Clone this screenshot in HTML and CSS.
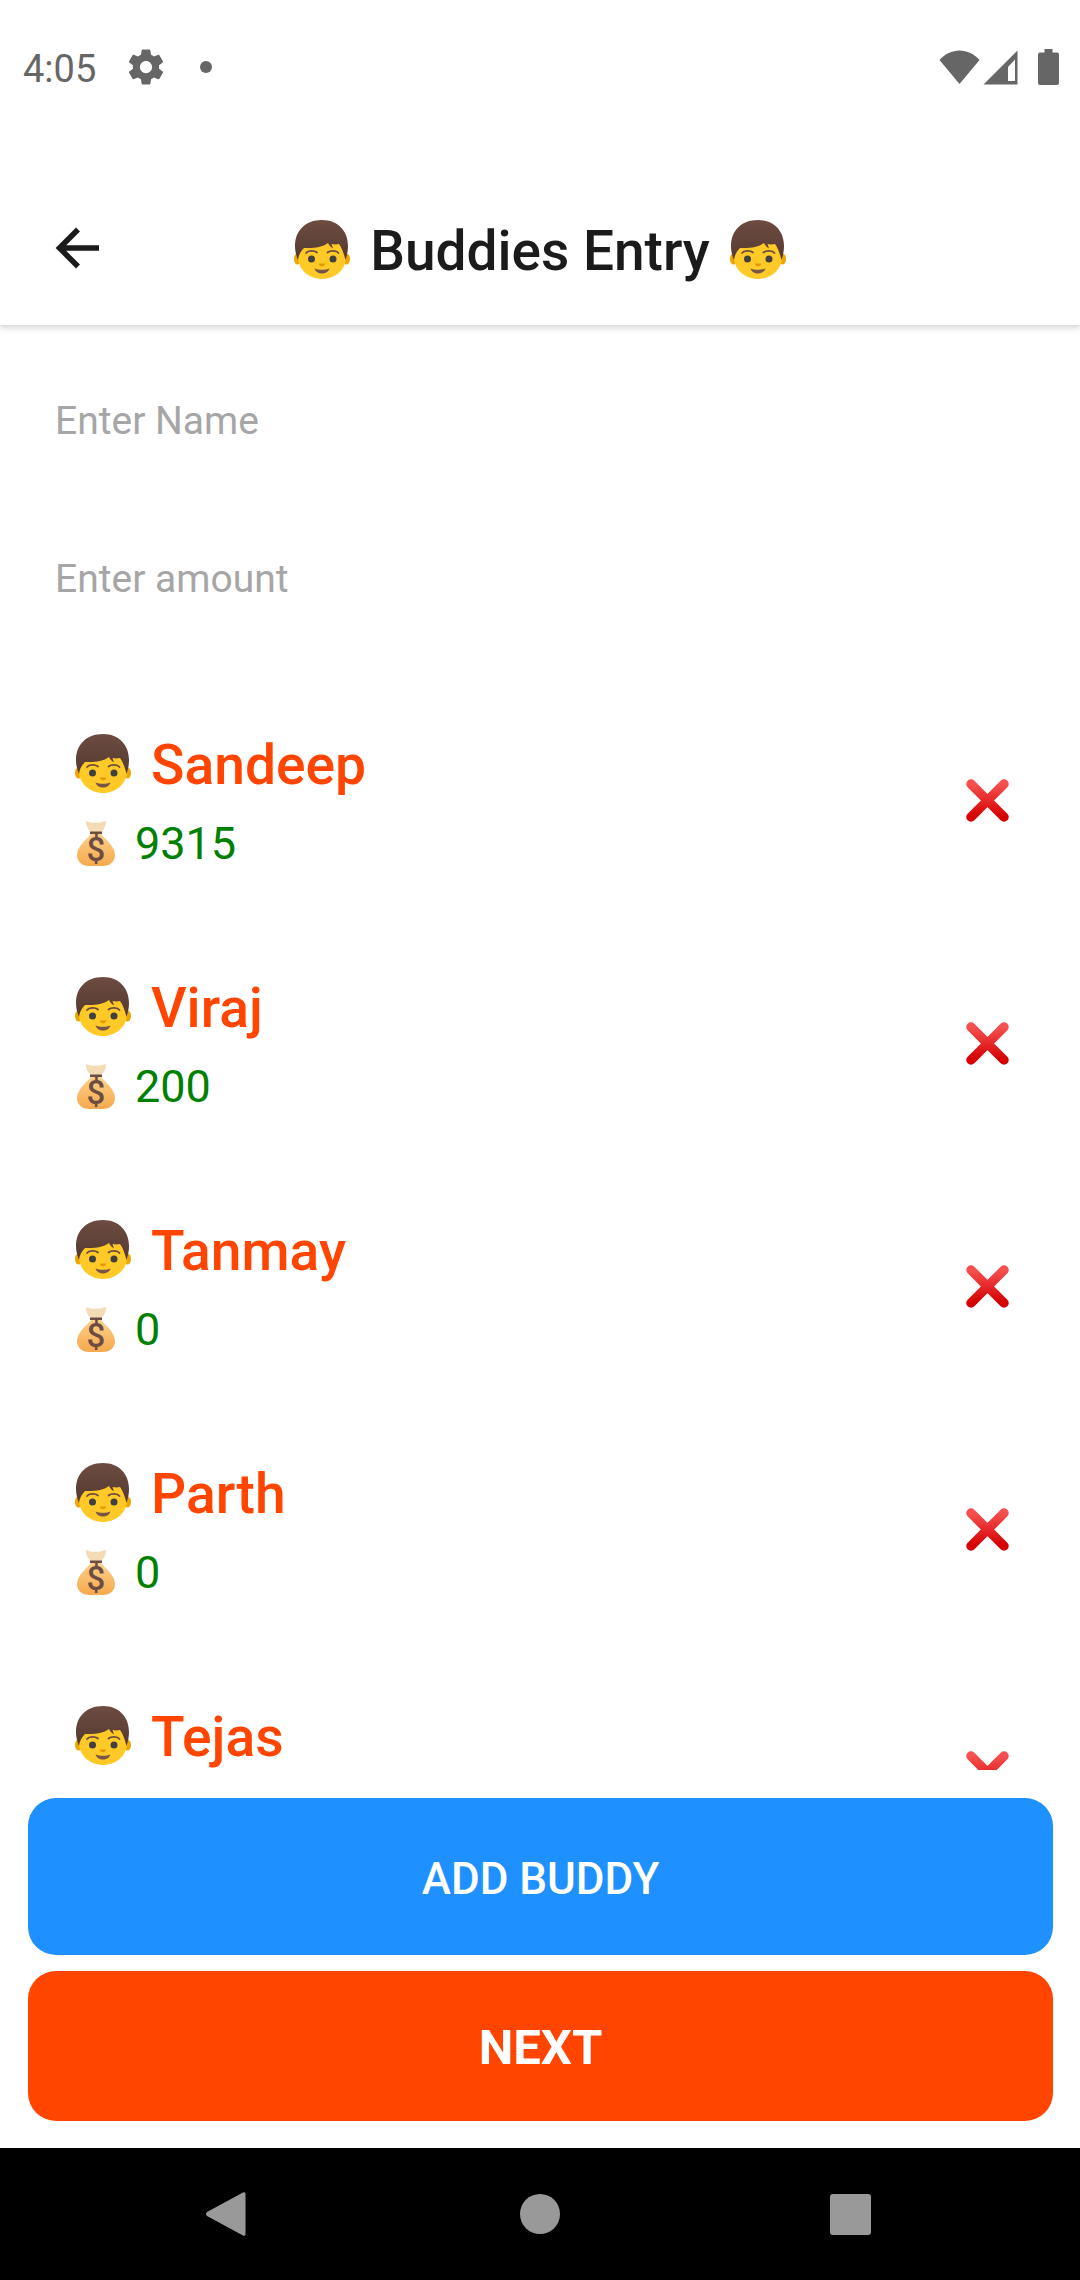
FILE: index.html
```html
<!DOCTYPE html>
<html lang="en">
<head>
  <meta charset="UTF-8">
  <title>Buddies Entry</title>
  <link rel="stylesheet" href="styles.css">
</head>
<body>
  <svg class="defs" width="0" height="0">
    <defs>
      <linearGradient id="hair-grad" x1="0" y1="0" x2="0" y2="1">
        <stop offset="0" stop-color="#6d4c41"/>
        <stop offset="1" stop-color="#543930"/>
      </linearGradient>
      <linearGradient id="bag-grad" x1="0" y1="0" x2="0" y2="1">
        <stop offset="0" stop-color="#fdd08a"/>
        <stop offset="1" stop-color="#f5a94e"/>
      </linearGradient>
      <linearGradient id="cross-grad" x1="0" y1="0" x2="0" y2="1">
        <stop offset="0" stop-color="#f65050"/>
        <stop offset="1" stop-color="#d50000"/>
      </linearGradient>
      <symbol id="boy" viewBox="8 8 58 60">
        <ellipse cx="12.500" cy="48" rx="3.500" ry="5.500" fill="#eda600"/>
        <ellipse cx="61.500" cy="48" rx="3.500" ry="5.500" fill="#eda600"/>
        <path d="M37 22C22 22 13 32 13 46c0 13 11.500 22 24 22s24-9 24-22C61 32 52 22 37 22z" fill="#ffca28"/>
        <path d="M37 9C20 9 10 20 10 35c0 5 1 9 3 14 .5-4 2-8 6-12 9 .5 18-.5 24-5 1 2 2.500 4 5 5.500L46.500 33C49 33.500 51.500 33.500 54 33 57 37 59 43 60.500 49 62 45 63 40 63 35 63 20 53 9 37 9z" fill="url(#hair-grad)"/>
        <circle cx="26.500" cy="48" r="3.500" fill="#404040"/>
        <circle cx="48" cy="48" r="3.500" fill="#404040"/>
        <path d="M21 42c2-2.500 8-3 11-.5" fill="none" stroke="#6d4c41" stroke-width="1.800" stroke-linecap="round"/>
        <path d="M42.500 41.500c3-2.500 9-2 11 .5" fill="none" stroke="#6d4c41" stroke-width="1.800" stroke-linecap="round"/>
        <path d="M34 52.500h6c.5 1.200-1.500 2.800-3 2.800s-3.500-1.600-3-2.800z" fill="#e59600"/>
        <path d="M29.500 57.500c4 1.800 11 1.800 15 0-.8 3-4 5-7.500 5s-6.700-2-7.500-5z" fill="#795548"/>
      </symbol>
      <symbol id="bag" viewBox="0 0 40 46">
        <path d="M10 1c3 1.500 6 2 10 1.500C24 3 27 2 30 1c.5 3.500-2 9-5 11h-10C12 10 9.500 4.500 10 1z" fill="#f3dcb5"/>
        <path d="M14 11.500h12v2.500H14z" fill="#6d4c41"/>
        <path d="M15 14C11 19 1 26 1 35c0 8 7 11 12 11h14c5 0 12-3 12-11 0-9-10-16-14-21z" fill="url(#bag-grad)"/>
        <text class="bag-sign" x="20" y="41" text-anchor="middle">$</text>
      </symbol>
      <symbol id="cross" viewBox="0 0 43 43">
        <path d="M5 5l33 33M38 5L5 38" fill="none" stroke="url(#cross-grad)" stroke-width="9.500" stroke-linecap="round"/>
      </symbol>
    </defs>
  </svg>

  <div class="phone">
    <div class="status-bar">
      <span class="clock">4:05</span>
      <svg class="gear" viewBox="0 0 24 24"><path fill="#666" d="M19.430 12.980c.04-.32.07-.64.07-.98s-.03-.66-.07-.98l2.110-1.650c.19-.15.240-.42.120-.64l-2-3.460c-.12-.22-.39-.30-.61-.22l-2.490 1c-.52-.40-1.080-.73-1.690-.98l-.38-2.650C14.460 2.180 14.250 2 14 2h-4c-.25 0-.46.18-.49.420l-.38 2.650c-.61.25-1.170.59-1.690.98l-2.490-1c-.23-.09-.49 0-.61.220l-2 3.460c-.13.22-.07.49.12.64l2.110 1.650c-.04.32-.07.65-.07.98s.03.66.07.98l-2.110 1.650c-.19.15-.24.42-.12.64l2 3.460c.12.22.39.30.61.22l2.490-1c.52.40 1.080.73 1.690.98l.38 2.650c.03.24.24.42.49.42h4c.25 0 .46-.18.49-.42l.38-2.650c.61-.25 1.170-.59 1.690-.98l2.490 1c.23.09.49 0 .61-.22l2-3.460c.12-.22.07-.49-.12-.64l-2.110-1.650zM12 15.500c-1.930 0-3.500-1.570-3.500-3.500s1.570-3.500 3.500-3.500 3.500 1.570 3.500 3.500-1.570 3.500-3.500 3.500z"/></svg>
      <span class="dot"></span>
      <span class="status-right">
        <svg class="wifi" viewBox="0 0 41 34"><path fill="#666" d="M.5 10C6 4 13 .500 20.500.500S35 4 40.500 10L20.500 34z"/></svg>
        <svg class="signal" viewBox="0 0 35 35"><path fill="#666" d="M34.500.500V34.500H.5z"/><path fill="#fff" d="M32 9.500V31h-7V17z"/></svg>
        <svg class="battery" viewBox="0 0 21 36"><path fill="#666" d="M6.500 0h8v3.500H19c1.100 0 2 .9 2 2V34c0 1.100-.9 2-2 2H2c-1.100 0-2-.9-2-2V5.500c0-1.100.9-2 2-2h4.500z"/></svg>
      </span>
    </div>

    <header class="toolbar">
      <svg class="back-arrow" viewBox="0 0 44 44"><path d="M44 22H5M23 3.500L4.500 22 23 40.500" fill="none" stroke="#1b1b1b" stroke-width="5.500"/></svg>
      <h1 class="title">
        <svg class="boy-title"><use href="#boy"/></svg>
        <span class="title-text">Buddies Entry</span>
        <svg class="boy-title"><use href="#boy"/></svg>
      </h1>
    </header>

    <div class="fields">
      <div class="field">Enter Name</div>
      <div class="field">Enter amount</div>
    </div>

    <div class="buddy-list">
      <div class="buddy">
        <div class="buddy-info">
          <div class="buddy-name"><svg class="boy-icon"><use href="#boy"/></svg>Sandeep</div>
          <div class="buddy-amount"><svg class="bag-icon"><use href="#bag"/></svg>9315</div>
        </div>
        <svg class="remove"><use href="#cross"/></svg>
      </div>
      <div class="buddy">
        <div class="buddy-info">
          <div class="buddy-name"><svg class="boy-icon"><use href="#boy"/></svg>Viraj</div>
          <div class="buddy-amount"><svg class="bag-icon"><use href="#bag"/></svg>200</div>
        </div>
        <svg class="remove"><use href="#cross"/></svg>
      </div>
      <div class="buddy">
        <div class="buddy-info">
          <div class="buddy-name"><svg class="boy-icon"><use href="#boy"/></svg>Tanmay</div>
          <div class="buddy-amount"><svg class="bag-icon"><use href="#bag"/></svg>0</div>
        </div>
        <svg class="remove"><use href="#cross"/></svg>
      </div>
      <div class="buddy">
        <div class="buddy-info">
          <div class="buddy-name"><svg class="boy-icon"><use href="#boy"/></svg>Parth</div>
          <div class="buddy-amount"><svg class="bag-icon"><use href="#bag"/></svg>0</div>
        </div>
        <svg class="remove"><use href="#cross"/></svg>
      </div>
      <div class="buddy">
        <div class="buddy-info">
          <div class="buddy-name"><svg class="boy-icon"><use href="#boy"/></svg>Tejas</div>
          <div class="buddy-amount"></div>
        </div>
        <svg class="remove"><use href="#cross"/></svg>
      </div>
    </div>

    <div class="actions">
      <button class="btn btn-add">ADD BUDDY</button>
      <button class="btn btn-next">NEXT</button>
    </div>

    <nav class="nav-bar">
      <svg class="nav-back" viewBox="0 0 40 44"><path fill="#999" d="M37 .5c1.500-.8 2.500 0 2.500 1.500v40c0 1.500-1 2.300-2.500 1.500L1 24c-1.300-1-1.300-3 0-4z"/></svg>
      <span class="nav-home"></span>
      <span class="nav-recent"></span>
    </nav>
  </div>
</body>
</html>
```

FILE: styles.css
```css
* {
  box-sizing: border-box;
}
html, body {
  margin: 0;
  padding: 0;
}
body {
  font-family: Roboto, "Liberation Sans", sans-serif;
  background-color: #fff;
}
.defs {
  position: absolute;
}
.bag-sign {
  font-family: Roboto, "Liberation Sans", sans-serif;
  font-size: 33px;
  font-weight: 500;
  fill: #6d4c41;
}
.phone {
  width: 1080px;
  height: 2280px;
  display: flex;
  flex-direction: column;
  overflow: hidden;
}

/* status bar */
.status-bar {
  height: 135px;
  flex: none;
  padding: 50px 21px 0 23px;
  display: flex;
  align-items: flex-start;
  background-color: #fff;
  position: relative;
  z-index: 1;
}
.clock {
  font-size: 38px;
  line-height: 38px;
  color: #666;
  width: 102px;
}
.gear {
  width: 42px;
  height: 42px;
  margin-top: -4px;
}
.dot {
  width: 12px;
  height: 12px;
  border-radius: 50%;
  background-color: #666;
  margin: 11px 0 0 33px;
}
.status-right {
  margin-left: auto;
  display: flex;
  align-items: flex-start;
}
.wifi {
  width: 41px;
  height: 34px;
}
.signal {
  width: 35px;
  height: 35px;
  margin-left: 3px;
}
.battery {
  width: 21px;
  height: 36px;
  margin: -1px 0 0 20px;
}

/* toolbar */
.toolbar {
  height: 190px;
  flex: none;
  display: flex;
  align-items: center;
  padding: 36px 0 0 55px;
  box-shadow: 0 3px 6px rgba(0, 0, 0, 0.16);
  background-color: #fff;
}
.back-arrow {
  width: 44px;
  height: 44px;
  flex: none;
}
.title {
  margin: 0;
  flex: 1;
  padding-right: 99px;
  display: flex;
  justify-content: center;
  align-items: center;
  gap: 19px;
  font-size: 55px;
  font-weight: 500;
  color: #1b1b1b;
}
.title-text {
  padding-top: 5px;
}
.boy-title {
  width: 58px;
  height: 60px;
  margin-top: 2px;
}

/* inputs */
.fields {
  flex: none;
  padding: 0 55px;
}
.field {
  height: 158px;
  display: flex;
  align-items: center;
  font-size: 39px;
  color: #a6a6a6;
}
.fields .field:first-child {
  margin-top: 17px;
}

/* list */
.buddy-list {
  flex: 1;
  overflow: hidden;
  margin-bottom: 28px;
  padding-top: 21px;
}
.buddy {
  height: 243px;
  display: flex;
  align-items: center;
  justify-content: space-between;
  padding: 0 71px 0 74px;
}
.buddy-name {
  display: flex;
  align-items: center;
  font-size: 55.2px;
  font-weight: 500;
  color: #ff4500;
  height: 70px;
  padding-top: 3px;
}
.boy-icon {
  width: 58px;
  height: 60px;
  margin: -3px 19px 0 0;
}
.buddy-amount {
  display: flex;
  align-items: center;
  font-size: 45px;
  color: #008000;
  height: 60px;
  margin-top: 15px;
}
.bag-icon {
  width: 40px;
  height: 46px;
  margin: 0 19px 0 2px;
}
.remove {
  width: 43px;
  height: 43px;
  flex: none;
}

/* buttons */
.actions {
  flex: none;
  padding: 0 27px 0 28px;
}
.btn {
  display: block;
  width: 100%;
  border: none;
  border-radius: 28px;
  color: #fff;
  font-family: inherit;
  font-weight: 700;
  text-align: center;
}
.btn-add {
  height: 157px;
  padding: 5px 0 0;
  background-color: #1e90ff;
  font-size: 44px;
  font-weight: 500;
}
.btn-next {
  height: 150px;
  padding: 3px 0 0;
  margin-top: 16px;
  margin-bottom: 27px;
  background-color: #ff4500;
  font-size: 49px;
}

/* navigation */
.nav-bar {
  height: 132px;
  flex: none;
  background-color: #000;
  display: flex;
  align-items: center;
}
.nav-back {
  width: 40px;
  height: 44px;
  margin-left: 206px;
}
.nav-home {
  width: 40px;
  height: 40px;
  border-radius: 50%;
  background-color: #999;
  margin-left: 274px;
}
.nav-recent {
  width: 41px;
  height: 41px;
  border-radius: 3px;
  background-color: #999;
  margin-left: 270px;
}
```
